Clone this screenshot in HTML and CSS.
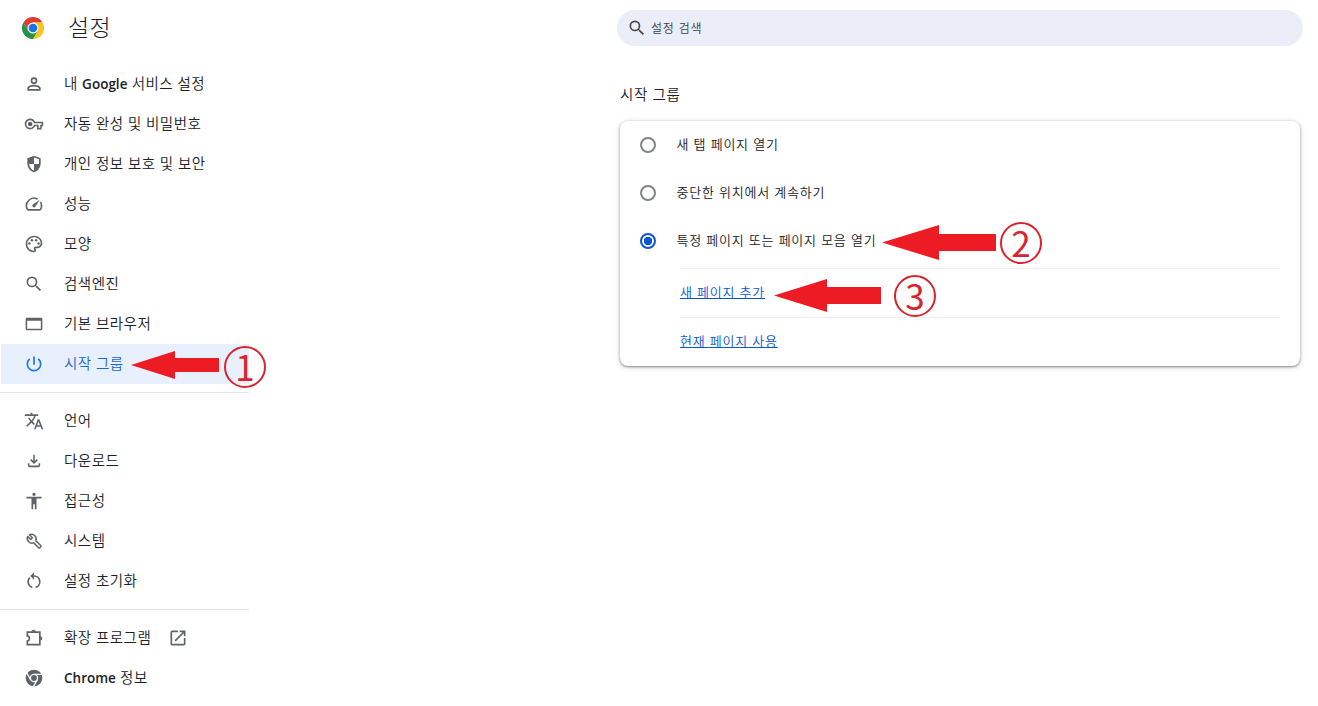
FILE: index.html
```html
<!DOCTYPE html>
<html lang="ko">
<head>
    <meta charset="UTF-8">
    <meta name="viewport" content="width=device-width, initial-scale=1.0">
    <title>설정</title>
    <link rel="stylesheet" href="styles.css">
</head>
<body>
    <div class="page">
        <aside class="sidebar">
            <header class="brand">
                <svg class="logo" viewBox="0 0 48 48">
                    <circle cx="24" cy="24" r="24" fill="#fff"/>
                    <path fill="#e33b2e" d="M24 12h20.8A24 24 0 0 0 3.2 12l10.4 18L24 12z"/>
                    <path fill="#fcc31e" d="M34.4 30L24 48a24 24 0 0 0 20.8-36H24z"/>
                    <path fill="#229342" d="M13.6 30L3.2 12A24 24 0 0 0 24 48l10.4-18z"/>
                    <circle cx="24" cy="24" r="12" fill="#fff"/>
                    <circle cx="24" cy="24" r="9.5" fill="#1a73e8"/>
                </svg>
                <h1>설정</h1>
            </header>

            <nav class="menu">
                <a class="menu-item">
                    <svg class="icon" viewBox="0 0 24 24"><path d="M12 4a4 4 0 1 0 0 8 4 4 0 0 0 0-8zm0 2a2 2 0 1 1 0 4 2 2 0 0 1 0-4zm0 7c-2.67 0-8 1.34-8 4v3h16v-3c0-2.66-5.33-4-8-4zm6 5H6v-1c.2-.72 3.3-2 6-2s5.8 1.29 6 2v1z"/></svg>
                    <span>내 <b>Google</b> 서비스 설정</span>
                </a>
                <a class="menu-item">
                    <svg class="icon" viewBox="-1 -1 26 26"><path d="M22 19h-6v-4h-2.68c-1.14 2.42-3.6 4-6.32 4-3.86 0-7-3.14-7-7s3.14-7 7-7c2.72 0 5.17 1.58 6.32 4H24v6h-2v4zm-4-2h2v-4h2v-2H11.94l-.23-.67C11.01 8.34 9.11 7 7 7c-2.76 0-5 2.24-5 5s2.24 5 5 5c2.11 0 4.01-1.34 4.71-3.33l.23-.67H18v4zM7 15c-1.65 0-3-1.35-3-3s1.35-3 3-3 3 1.35 3 3-1.35 3-3 3z"/></svg>
                    <span>자동 완성 및 비밀번호</span>
                </a>
                <a class="menu-item">
                    <svg class="icon" viewBox="0 0 24 24"><path d="M12 2L4 5v6.1c0 5.05 3.41 9.76 8 10.9 4.59-1.14 8-5.85 8-10.9V5l-8-3zm6 9.1c0 .3 0 .6-.04.9H12v7.93c-3.1-1-5.5-4.3-5.96-7.93H12V4.14l6 2.25v4.71z"/></svg>
                    <span>개인 정보 보호 및 보안</span>
                </a>
                <a class="menu-item">
                    <svg class="icon" viewBox="0 0 24 24"><path d="M20.38 8.57l-1.23 1.85a8 8 0 0 1-.22 7.58H5.07A8 8 0 0 1 15.58 6.85l1.85-1.23A10 10 0 0 0 3.35 19a2 2 0 0 0 1.72 1h13.85a2 2 0 0 0 1.74-1 10 10 0 0 0-.27-10.44zm-9.79 6.84a2 2 0 0 0 2.83 0l5.66-8.49-8.49 5.66a2 2 0 0 0 0 2.83z"/></svg>
                    <span>성능</span>
                </a>
                <a class="menu-item">
                    <svg class="icon" viewBox="0 0 24 24"><path d="M12 22C6.49 22 2 17.51 2 12S6.49 2 12 2s10 4.04 10 9c0 3.31-2.69 6-6 6h-1.77c-.28 0-.5.22-.5.5 0 .12.05.23.13.33.41.47.64 1.06.64 1.67A2.5 2.5 0 0 1 12 22zm0-18c-4.41 0-8 3.59-8 8s3.59 8 8 8c.28 0 .5-.22.5-.5a.54.54 0 0 0-.14-.35c-.41-.46-.63-1.05-.63-1.65a2.5 2.5 0 0 1 2.5-2.5H16c2.21 0 4-1.79 4-4 0-3.86-3.59-7-8-7z"/><circle cx="6.5" cy="11.5" r="1.5"/><circle cx="9.5" cy="7.5" r="1.5"/><circle cx="14.5" cy="7.5" r="1.5"/><circle cx="17.5" cy="11.5" r="1.5"/></svg>
                    <span>모양</span>
                </a>
                <a class="menu-item">
                    <svg class="icon" viewBox="0 0 24 24"><path d="M15.5 14h-.79l-.28-.27A6.47 6.47 0 0 0 16 9.5 6.5 6.5 0 1 0 9.5 16c1.61 0 3.09-.59 4.23-1.57l.27.28v.79l5 4.99L20.49 19l-4.99-5zm-6 0a4.5 4.5 0 1 1 0-9 4.5 4.5 0 0 1 0 9z"/></svg>
                    <span>검색엔진</span>
                </a>
                <a class="menu-item">
                    <svg class="icon" viewBox="0 0 24 24"><path d="M20.5 4.5h-17C2.700 4.500 2 5.200 2 6v12c0 .8.7 1.500 1.500 1.500h17c.8 0 1.500-.7 1.500-1.500V6c0-.8-.7-1.500-1.500-1.500zm-.3 13.300H3.800V8h16.400v9.800z"/></svg>
                    <span>기본 브라우저</span>
                </a>
                <a class="menu-item selected">
                    <svg class="icon" viewBox="0 0 24 24"><path d="M13 3h-2v10h2V3zm4.83 2.17l-1.42 1.42A6.92 6.92 0 0 1 19 12a7 7 0 1 1-11.42-5.42L6.17 5.17A8.93 8.93 0 0 0 3 12a9 9 0 0 0 18 0c0-2.74-1.23-5.18-3.17-6.83z"/></svg>
                    <span>시작 그룹</span>
                </a>
            </nav>

            <nav class="menu">
                <a class="menu-item">
                    <svg class="icon" viewBox="0 0 24 24"><path d="M12.87 15.07l-2.54-2.51.03-.03A17.52 17.52 0 0 0 14.07 6H17V4h-7V2H8v2H1v1.99h11.17C11.5 7.92 10.44 9.75 9 11.35 8.07 10.32 7.3 9.19 6.69 8h-2c.73 1.63 1.73 3.17 2.98 4.56l-5.09 5.02L4 19l5-5 3.11 3.11.76-2.04zM18.5 10h-2L12 22h2l1.12-3h4.75L21 22h2l-4.5-12zm-2.62 7l1.62-4.33L19.12 17h-3.24z"/></svg>
                    <span>언어</span>
                </a>
                <a class="menu-item">
                    <svg class="icon" viewBox="-1 -1 26 26"><path d="M12 16l-5-5 1.4-1.45 2.6 2.6V4h2v8.15l2.6-2.6L17 11l-5 5zm-6 4c-1.1 0-2-.9-2-2v-3h2v3h12v-3h2v3c0 1.1-.9 2-2 2H6z"/></svg>
                    <span>다운로드</span>
                </a>
                <a class="menu-item">
                    <svg class="icon" viewBox="0 0 24 24"><path d="M12 2a2 2 0 1 1 0 4 2 2 0 0 1 0-4zm9 7h-6v13h-2v-6h-2v6H9V9H3V7h18v2z"/></svg>
                    <span>접근성</span>
                </a>
                <a class="menu-item">
                    <svg class="icon" viewBox="0 0 24 24"><path fill="none" stroke="currentColor" stroke-width="1.8" stroke-linejoin="round" d="M6.500 4.500c2.200-1 4.800-.6 6.500 1.100 1.600 1.600 2 4 1.200 6l5.900 5.900c.5.500.5 1 0 1.500l-1.100 1.100c-.5.5-1 .5-1.500 0l-5.900-5.900c-2 .8-4.400.4-6-1.200-1.700-1.700-2.100-4.300-1.100-6.500l3.600 3.600 2-2z"/></svg>
                    <span>시스템</span>
                </a>
                <a class="menu-item">
                    <svg class="icon" viewBox="0 0 24 24"><path d="M12 5V1.500L7.500 6 12 10.500V7a6 6 0 0 1 2 11.660v2.080A8 8 0 0 0 12 5zM6 13c0-1.650.67-3.150 1.760-4.240L6.340 7.340A8 8 0 0 0 10 20.740v-2.080A6 6 0 0 1 6 13z"/></svg>
                    <span>설정 초기화</span>
                </a>
            </nav>

            <nav class="menu">
                <a class="menu-item">
                    <svg class="icon" viewBox="0 0 24 24"><path fill="none" stroke="currentColor" stroke-width="2" d="M4 5h15v15H4v-4.500c3.300-.4 3.300-5.600 0-6z"/><path d="M9 4.500a2.500 2.500 0 0 1 5 0zM19.500 10a2.500 2.500 0 0 1 0 5z"/></svg>
                    <span>확장 프로그램</span>
                    <svg class="icon external" viewBox="0 0 24 24"><path d="M19 19H5V5h7V3H5a2 2 0 0 0-2 2v14a2 2 0 0 0 2 2h14c1.100 0 2-.9 2-2v-7h-2v7zM14 3v2h3.590l-9.830 9.830 1.410 1.410L19 6.410V10h2V3h-7z"/></svg>
                </a>
                <a class="menu-item">
                    <svg class="icon" viewBox="0 0 24 24"><circle cx="12" cy="12" r="10"/><circle cx="12" cy="12" r="4.300" fill="none" stroke="#fff" stroke-width="1.500"/><path d="M12 7.500h9.500M8.100 14.200L3.400 6M15.900 14.200l-4.700 8.200" stroke="#fff" stroke-width="1.500"/></svg>
                    <span><b>Chrome</b> 정보</span>
                </a>
            </nav>
        </aside>

        <main class="content">
            <div class="search-bar">
                <svg class="icon" viewBox="0 0 24 24"><path d="M15.5 14h-.79l-.28-.27A6.47 6.47 0 0 0 16 9.5 6.5 6.5 0 1 0 9.5 16c1.61 0 3.09-.59 4.23-1.57l.27.28v.79l5 4.99L20.49 19l-4.99-5zm-6 0a4.5 4.5 0 1 1 0-9 4.5 4.5 0 0 1 0 9z"/></svg>
                <span>설정 검색</span>
            </div>

            <h2>시작 그룹</h2>

            <section class="card">
                <label class="option">
                    <span class="radio"></span>
                    <span class="option-text">새 탭 페이지 열기</span>
                </label>
                <label class="option">
                    <span class="radio"></span>
                    <span class="option-text">중단한 위치에서 계속하기</span>
                </label>
                <label class="option">
                    <span class="radio checked"></span>
                    <span class="option-text">특정 페이지 또는 페이지 모음 열기</span>
                </label>
                <div class="links">
                    <div class="link-row"><a>새 페이지 추가</a></div>
                    <div class="link-row"><a>현재 페이지 사용</a></div>
                </div>
            </section>
        </main>
    </div>

    <!-- Step markers drawn over the page -->
    <svg class="arrow arrow-1" viewBox="0 0 88 28"><path d="M0 14L44 0v7h44v14H44v7z"/></svg>
    <span class="step step-1">1</span>
    <svg class="arrow arrow-2" viewBox="0 0 114 35"><path d="M0 17.500L57 0v9h57v17H57v9z"/></svg>
    <span class="step step-2">2</span>
    <svg class="arrow arrow-3" viewBox="0 0 107 33"><path d="M0 16.500L53 0v8h54v17H53v8z"/></svg>
    <span class="step step-3">3</span>
</body>
</html>
```
FILE: styles.css
```css
body {
    margin: 0;
    background-color: #fff;
    color: #202124;
    font-family: "Noto Sans CJK KR", sans-serif;
    font-weight: 350;
    overflow: hidden;
}

.page {
    display: flex;
    height: 706px;
}

.sidebar {
    width: 249px;
    flex-shrink: 0;
}

.brand {
    display: flex;
    align-items: center;
    gap: 24px;
    height: 56px;
    padding-left: 22px;
    margin-bottom: 8px;
}

.logo {
    width: 22px;
    height: 22px;
}

.brand h1 {
    margin: 0;
    padding-bottom: 4px;
    font-size: 23px;
    font-weight: 300;
    letter-spacing: 0.4px;
}

.menu + .menu {
    margin-top: 8px;
    padding-top: 8px;
    border-top: 1px solid #e3e5e8;
}

.menu-item {
    display: flex;
    align-items: center;
    height: 40px;
    padding-left: 23px;
    margin-left: 1px;
    font-size: 14.5px;
    letter-spacing: 0.5px;
    word-spacing: -0.3px;
}

.menu-item span {
    margin-left: 20px;
    padding-bottom: 4px;
}

.menu-item b {
    font-family: "Open Sans", "Noto Sans", sans-serif;
    font-size: 13.5px;
    font-weight: 600;
    letter-spacing: 0;
}

.menu-item.selected {
    background-color: #e8f0fe;
    color: #1967d2;
}

.icon {
    width: 20px;
    height: 20px;
    flex-shrink: 0;
    fill: currentColor;
    color: #5f6368;
}

.selected .icon {
    color: #1a73e8;
}

.menu-item .external {
    margin-left: 17px;
}

.content {
    width: 686px;
    margin-left: 368px;
    padding-top: 10px;
}

.search-bar {
    display: flex;
    align-items: center;
    gap: 4px;
    height: 36px;
    box-sizing: border-box;
    padding-left: 10px;
    border-radius: 18px;
    background-color: #ebeef8;
    color: #3c4043;
    font-size: 12px;
    letter-spacing: 0.75px;
}

.search-bar span {
    padding-bottom: 2px;
}

.search-bar .icon {
    color: #474747;
}

.content h2 {
    margin: 37px 0 16px 3px;
    font-size: 14.5px;
    font-weight: 350;
    line-height: 22px;
    letter-spacing: 0.6px;
}

.card {
    width: 680px;
    height: 245px;
    box-sizing: border-box;
    margin-left: 3px;
    border-radius: 8px;
    box-shadow: 0 1px 2px rgba(60, 64, 67, 0.5), 0 1px 4px 1px rgba(60, 64, 67, 0.2);
    font-size: 13px;
    letter-spacing: 0.75px;
}

.option {
    display: flex;
    align-items: center;
    gap: 20.5px;
    height: 48px;
    padding-left: 20px;
}

.option-text {
    padding-bottom: 3px;
}

.radio {
    width: 16px;
    height: 16px;
    box-sizing: border-box;
    border: 2px solid #80868b;
    border-radius: 50%;
}

.radio.checked {
    border-color: #0b57d0;
    background: radial-gradient(circle, #0b57d0 4px, transparent 4.5px);
}

.links {
    margin: 3px 20px 0 60px;
}

.link-row {
    display: flex;
    align-items: center;
    height: 48px;
    border-top: 1px solid #eceef0;
}

.link-row a {
    padding-bottom: 3px;
    color: #0b57d0;
    text-decoration: underline;
}

.arrow {
    position: absolute;
    fill: #ed1c24;
}

.arrow-1 {
    left: 131px;
    top: 351px;
    width: 88px;
    height: 28px;
}

.arrow-2 {
    left: 882px;
    top: 225px;
    width: 114px;
    height: 35px;
}

.arrow-3 {
    left: 774px;
    top: 279px;
    width: 107px;
    height: 33px;
}

.step {
    position: absolute;
    width: 42px;
    height: 42px;
    box-sizing: border-box;
    border: 2px solid #d9232e;
    border-radius: 50%;
    color: #d9232e;
    font-size: 35px;
    font-weight: 400;
    line-height: 36px;
    text-align: center;
}

.step-1 {
    left: 224px;
    top: 346px;
}

.step-2 {
    left: 1000px;
    top: 222px;
}

.step-3 {
    left: 894px;
    top: 275px;
}
```
